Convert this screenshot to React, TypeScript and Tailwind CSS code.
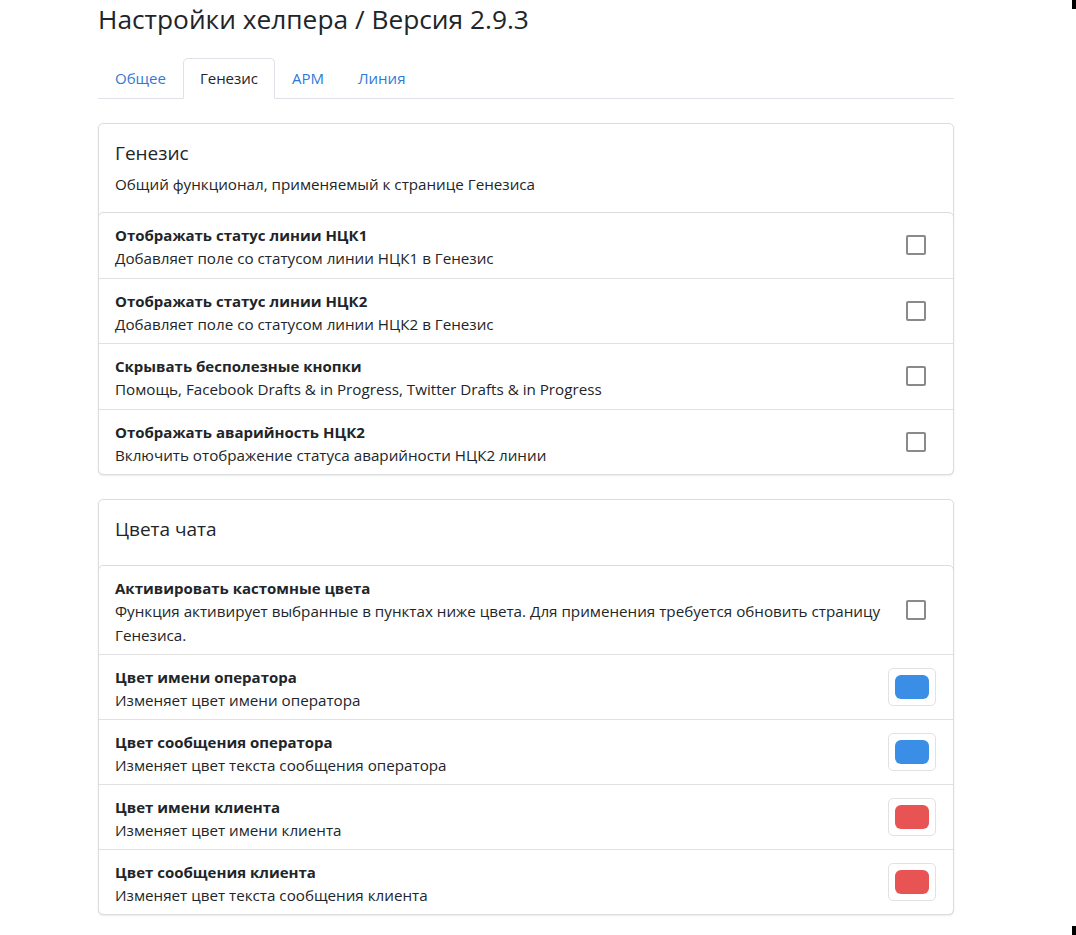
import React from "react";

const font = { fontFamily: '"Open Sans", "Noto Sans", sans-serif' };

type Row = { title: string; desc: string; kind: "check" | "color"; color?: string };

const genesis: Row[] = [
  { title: "Отображать статус линии НЦК1", desc: "Добавляет поле со статусом линии НЦК1 в Генезис", kind: "check" },
  { title: "Отображать статус линии НЦК2", desc: "Добавляет поле со статусом линии НЦК2 в Генезис", kind: "check" },
  { title: "Скрывать бесполезные кнопки", desc: "Помощь, Facebook Drafts & in Progress, Twitter Drafts & in Progress", kind: "check" },
  { title: "Отображать аварийность НЦК2", desc: "Включить отображение статуса аварийности НЦК2 линии", kind: "check" },
];

const colors: Row[] = [
  {
    title: "Активировать кастомные цвета",
    desc: "Функция активирует выбранные в пунктах ниже цвета. Для применения требуется обновить страницу Генезиса.",
    kind: "check",
  },
  { title: "Цвет имени оператора", desc: "Изменяет цвет имени оператора", kind: "color", color: "#3a8ee6" },
  { title: "Цвет сообщения оператора", desc: "Изменяет цвет текста сообщения оператора", kind: "color", color: "#3a8ee6" },
  { title: "Цвет имени клиента", desc: "Изменяет цвет имени клиента", kind: "color", color: "#e85454" },
  { title: "Цвет сообщения клиента", desc: "Изменяет цвет текста сообщения клиента", kind: "color", color: "#e85454" },
];

function Item({ row, last, tall }: { row: Row; last: boolean; tall: boolean }) {
  return (
    <div
      className={
        "flex items-center pl-[16px] pr-[17px] pt-[11px] " +
        (tall ? "pb-[7.5px] " : "pb-[7px] ") +
        (last ? "" : "border-b border-[#e1e1e1]")
      }
    >
      <div className="flex-1">
        <div className="text-[15px] leading-[22px] font-bold text-[#212529]">{row.title}</div>
        <div className="text-[15.2px] leading-[24px] text-[#212529]">{row.desc}</div>
      </div>
      {row.kind === "check" ? (
        <div className="w-[48px] shrink-0 flex justify-center mb-[4px]">
          <div className="w-[20px] h-[20px] border-2 border-[#8a8a8a] rounded-[2px] ml-[8px] bg-white" />
        </div>
      ) : (
        <div className="w-[48px] h-[38px] shrink-0 mb-[4px] border border-[#e2e2e2] rounded-[5px] flex items-center justify-center bg-white">
          <div className="w-[34px] h-[24px] rounded-[6px]" style={{ backgroundColor: row.color }} />
        </div>
      )}
    </div>
  );
}

function Card({ title, subtitle, rows }: { title: string; subtitle?: string; rows: Row[] }) {
  return (
    <div className="border border-[#dcdcdc] rounded-[5px] bg-white shadow-[0_1px_2px_rgba(0,0,0,0.08)]">
      <div className={"px-[16px] pt-[16px] " + (subtitle ? "pb-[17px]" : "pb-[22px]")}>
        <div className="text-[19px] leading-[27px] text-[#212529]">{title}</div>
        {subtitle && <div className="mt-[6px] text-[15.2px] leading-[22px] text-[#212529]">{subtitle}</div>}
      </div>
      <div className="border border-[#dcdcdc] rounded-[5px] -mx-px -mb-px">
        {rows.map((r, i) => (
          <Item key={i} row={r} last={i === rows.length - 1} tall={!!subtitle} />
        ))}
      </div>
    </div>
  );
}

export default function App() {
  const tabs = ["Общее", "Генезис", "АРМ", "Линия"];
  return (
    <div className="relative w-[1076px] min-h-[935px] bg-white" style={font}>
      <div className="absolute right-0 top-0 w-[4px] h-[9px] bg-black" />
      <div className="absolute right-0 bottom-0 w-[4px] h-[9px] bg-black" />
      <div className="ml-[98px] w-[856px] pt-[2px] pb-[20px]">
        <h1 className="text-[26.3px] leading-[34px] text-[#212529] font-normal">Настройки хелпера / Версия 2.9.3</h1>
        <div className="mt-[22px] flex border-b border-[#dee2e6] h-[41px]">
          {tabs.map((t, i) =>
            i === 1 ? (
              <div
                key={t}
                className="h-[41px] px-[16px] flex items-center text-[15px] text-[#212529] bg-white border border-[#dee2e6] border-b-white rounded-t-[5px] -mb-px"
              >
                {t}
              </div>
            ) : (
              <div key={t} className="h-[40px] px-[17px] flex items-center text-[15px] text-[#2f7ad8]">
                {t}
              </div>
            )
          )}
        </div>
        <div className="mt-[24px] flex flex-col gap-[24px]">
          <Card title="Генезис" subtitle="Общий функционал, применяемый к странице Генезиса" rows={genesis} />
          <Card title="Цвета чата" rows={colors} />
        </div>
      </div>
    </div>
  );
}
